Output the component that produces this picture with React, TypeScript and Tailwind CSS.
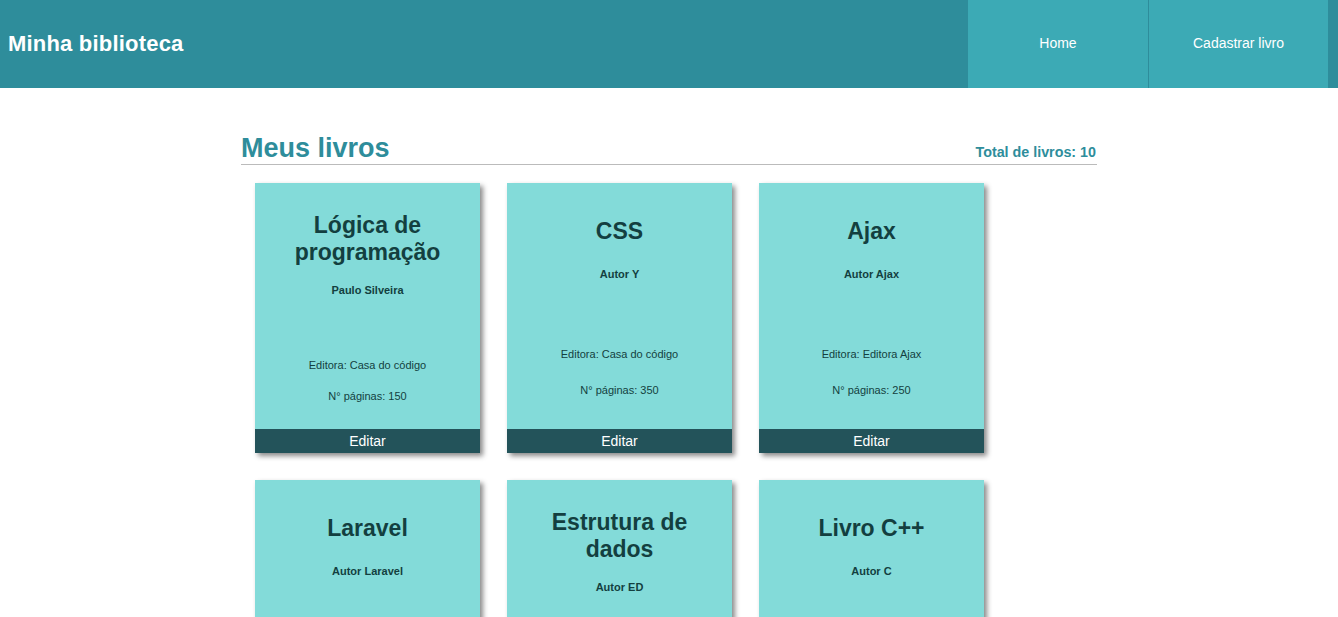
const books = [
  { titulo: 'Lógica de programação', autor: 'Paulo Silveira', editora: 'Casa do código', paginas: 150 },
  { titulo: 'CSS', autor: 'Autor Y', editora: 'Casa do código', paginas: 350 },
  { titulo: 'Ajax', autor: 'Autor Ajax', editora: 'Editora Ajax', paginas: 250 },
  { titulo: 'Laravel', autor: 'Autor Laravel', editora: 'Editora Laravel', paginas: 300 },
  { titulo: 'Estrutura de dados', autor: 'Autor ED', editora: 'Editora ED', paginas: 420 },
  { titulo: 'Livro C++', autor: 'Autor C', editora: 'Editora C', paginas: 500 },
  { titulo: 'JavaScript', autor: 'Autor JS', editora: 'Casa do código', paginas: 280 },
  { titulo: 'PHP', autor: 'Autor PHP', editora: 'Editora PHP', paginas: 320 },
  { titulo: 'Python', autor: 'Autor Python', editora: 'Editora Python', paginas: 410 },
  { titulo: 'Banco de dados', autor: 'Autor BD', editora: 'Editora BD', paginas: 360 },
]

function BookCard({ book }: { book: (typeof books)[number] }) {
  return (
    <div className="w-[225px] h-[270px] bg-[#83dbd9] flex flex-col shadow-[3px_3px_5px_#8a8a8a]">
      <div className="flex-1 flex flex-col justify-evenly pt-[7px] pb-[5px] px-[12px] text-center text-[#133f40]">
        <h2 className="text-[23px] font-bold leading-[27px] pt-px">{book.titulo}</h2>
        <p className="text-[11px] font-bold leading-[13px] mt-[-4px] mb-[41px]">{book.autor}</p>
        <p className="text-[11px] leading-[13px]">Editora: {book.editora}</p>
        <p className="text-[11px] leading-[13px] mt-[-4px]">N° páginas: {book.paginas}</p>
      </div>
      <div className="h-[24px] bg-[#23535a] text-white text-[14px] leading-[24px] text-center">
        Editar
      </div>
    </div>
  )
}

export default function App() {
  return (
    <div className="min-h-screen bg-white font-['Liberation_Sans',Arial,sans-serif]">
      {/* Header */}
      <header className="h-[88px] bg-[#2e8d9b] flex items-center justify-between pr-[10px]">
        <h1 className="pl-[8px] pb-[2px] text-white text-[22px] tracking-[0.2px] font-bold">Minha biblioteca</h1>
        <nav className="flex h-full gap-px">
          <a className="w-[180px] h-full pb-[2px] bg-[#3caab5] text-white text-[14px] flex items-center justify-center">
            Home
          </a>
          <a className="w-[179px] h-full pb-[2px] bg-[#3caab5] text-white text-[14px] flex items-center justify-center">
            Cadastrar livro
          </a>
        </nav>
      </header>

      {/* Conteúdo */}
      <main className="w-[856px] mx-auto pt-[47px]">
        <div className="flex items-baseline justify-between border-b border-[#bbbbbb] pb-[2px]">
          <h1 className="text-[27px] font-bold leading-[27px] text-[#2e8d9b]">Meus livros</h1>
          <span className="text-[14.3px] font-bold leading-none text-[#2e8d9b] pr-px">Total de livros: {books.length}</span>
        </div>
        <div className="flex flex-wrap gap-[27px] pl-[14px] pt-[18px] pb-[30px]">
          {books.map((b) => (
            <BookCard key={b.titulo} book={b} />
          ))}
        </div>
      </main>
    </div>
  )
}
